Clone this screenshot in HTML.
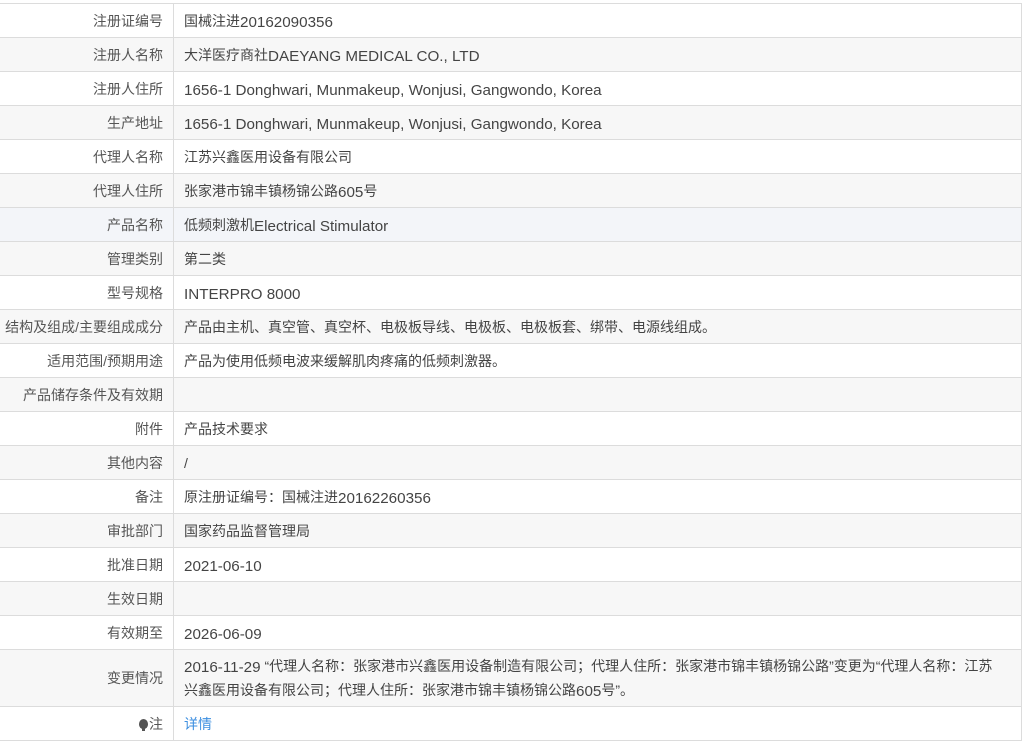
<!DOCTYPE html>
<html><head><meta charset="utf-8"><style>
body{margin:0;background:#fff;font-family:"Liberation Sans","Noto Sans CJK SC",sans-serif;font-size:14px;color:#555;}
table{position:absolute;left:-1px;top:3px;width:1023px;border-collapse:collapse;}
td{border:1px solid #dcdcdc;height:33px;padding:0;line-height:20px;}
td.l{width:163px;text-align:right;padding-right:10px;color:#555;}
td.v{padding-left:10px;color:#444;}
tr:nth-child(even) td{background:#f7f7f7;}
tr.h td{background:#f3f5f9;}
tr.big td{height:56px;}
a{color:#3d8fe0;text-decoration:none;}
.e{font-size:15.2px;line-height:1;vertical-align:-1px;}
.bulb{display:inline-block;width:9px;height:10px;background:#555;border-radius:50% 50% 45% 45%;vertical-align:0px;margin-right:1px;position:relative}
.bulb:after{content:"";position:absolute;left:3px;top:9px;width:3px;height:3px;background:#555}
</style></head><body>
<table>
<tr><td class="l">注册证编号</td><td class="v">国械注进<span class="e">20162090356</span></td></tr>
<tr><td class="l">注册人名称</td><td class="v">大洋医疗商社<span class="e">DAEYANG MEDICAL CO., LTD</span></td></tr>
<tr><td class="l">注册人住所</td><td class="v"><span class="e">1656-1 Donghwari, Munmakeup, Wonjusi, Gangwondo, Korea</span></td></tr>
<tr><td class="l">生产地址</td><td class="v"><span class="e">1656-1 Donghwari, Munmakeup, Wonjusi, Gangwondo, Korea</span></td></tr>
<tr><td class="l">代理人名称</td><td class="v">江苏兴鑫医用设备有限公司</td></tr>
<tr><td class="l">代理人住所</td><td class="v">张家港市锦丰镇杨锦公路<span class="e">605</span>号</td></tr>
<tr class="h"><td class="l">产品名称</td><td class="v">低频刺激机<span class="e">Electrical Stimulator</span></td></tr>
<tr><td class="l">管理类别</td><td class="v">第二类</td></tr>
<tr><td class="l">型号规格</td><td class="v"><span class="e">INTERPRO 8000</span></td></tr>
<tr><td class="l">结构及组成/主要组成成分</td><td class="v">产品由主机、真空管、真空杯、电极板导线、电极板、电极板套、绑带、电源线组成。</td></tr>
<tr><td class="l">适用范围/预期用途</td><td class="v">产品为使用低频电波来缓解肌肉疼痛的低频刺激器。</td></tr>
<tr><td class="l">产品储存条件及有效期</td><td class="v"></td></tr>
<tr><td class="l">附件</td><td class="v">产品技术要求</td></tr>
<tr><td class="l">其他内容</td><td class="v">/</td></tr>
<tr><td class="l">备注</td><td class="v">原注册证编号：国械注进<span class="e">20162260356</span></td></tr>
<tr><td class="l">审批部门</td><td class="v">国家药品监督管理局</td></tr>
<tr><td class="l">批准日期</td><td class="v"><span class="e">2021-06-10</span></td></tr>
<tr><td class="l">生效日期</td><td class="v"></td></tr>
<tr><td class="l">有效期至</td><td class="v"><span class="e">2026-06-09</span></td></tr>
<tr class="big"><td class="l">变更情况</td><td class="v" style="line-height:24px;white-space:nowrap"><span class="e">2016-11-29</span> “代理人名称：张家港市兴鑫医用设备制造有限公司；代理人住所：张家港市锦丰镇杨锦公路”变更为“代理人名称：江苏<br>兴鑫医用设备有限公司；代理人住所：张家港市锦丰镇杨锦公路<span class="e">605</span>号”。</td></tr>
<tr><td class="l"><span class="bulb"></span>注</td><td class="v"><a>详情</a></td></tr>
</table>
</body></html>
